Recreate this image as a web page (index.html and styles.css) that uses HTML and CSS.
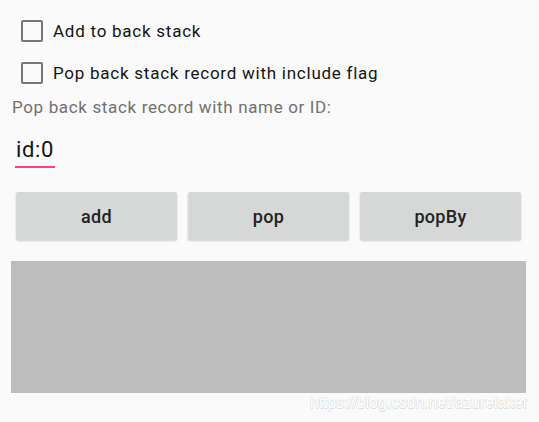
FILE: index.html
```html
<!DOCTYPE html>
<html>
<head>
<meta charset="utf-8">
<link rel="stylesheet" href="styles.css">
</head>
<body>
<div class="screen">
  <label class="check-row">
    <span class="box"></span>
    <span class="check-text">Add to back stack</span>
  </label>
  <label class="check-row">
    <span class="box"></span>
    <span class="check-text">Pop back stack record with include flag</span>
  </label>
  <div class="hint">Pop back stack record with name or ID:</div>
  <div class="field"><span class="field-text">id:0</span></div>
  <div class="buttons">
    <div class="btn">add</div>
    <div class="btn">pop</div>
    <div class="btn">popBy</div>
  </div>
  <div class="panel"></div>
  <div class="watermark">https://blog.csdn.net/azurelaker</div>
</div>
</body>
</html>
```
FILE: styles.css
```css
html, body {
  margin: 0;
  padding: 0;
  background: #fafafa;
}
.screen {
  position: relative;
  width: 539px;
  height: 422px;
  font-family: Roboto, "Noto Sans", sans-serif;
  display: flex;
  flex-direction: column;
}
.check-row {
  display: flex;
  align-items: center;
  height: 42px;
  padding-left: 21px;
}
.check-row:first-child {
  margin-top: 10px;
}
.box {
  width: 18px;
  height: 18px;
  border: 2.5px solid #767676;
  border-radius: 2px;
  flex: none;
}
.check-text {
  margin-left: 10px;
  font-size: 17px;
  letter-spacing: 0.75px;
  color: #141414;
}
.hint {
  margin-top: 3px;
  padding-left: 12px;
  font-size: 17px;
  letter-spacing: 0.65px;
  color: #707070;
  line-height: 20px;
}
.field {
  margin-top: 20px;
  padding-left: 15px;
  display: flex;
}
.field-text {
  font-size: 22px;
  letter-spacing: 0.6px;
  color: #141414;
  line-height: 26px;
  border-bottom: 2.5px solid #ff4081;
  padding: 0 1px 3px 1px;
}
.buttons {
  margin-top: 24px;
  padding: 0 18px 0 16px;
  display: grid;
  grid-template-columns: repeat(3, 1fr);
  column-gap: 11px;
}
.btn {
  height: 48px;
  background: #d6d7d7;
  border-radius: 2px;
  box-shadow: 0 1px 2px rgba(0,0,0,0.18);
  display: flex;
  align-items: center;
  justify-content: center;
  font-size: 18px;
  font-weight: 500;
  letter-spacing: 0.3px;
  color: #222222;
}
.panel {
  margin: 21px 13px 0 11px;
  height: 132px;
  background: #bdbdbd;
}
.watermark {
  position: absolute;
  right: 11px;
  top: 394px;
  font-family: "Liberation Sans", Arial, sans-serif;
  font-size: 15.7px;
  color: #ffffff;
  text-shadow: 0.5px 0 0 #dcdcdc, -0.5px 0 0 #dcdcdc, 0 0.5px 0 #dcdcdc, 0 -0.5px 0 #dcdcdc;
}
```
